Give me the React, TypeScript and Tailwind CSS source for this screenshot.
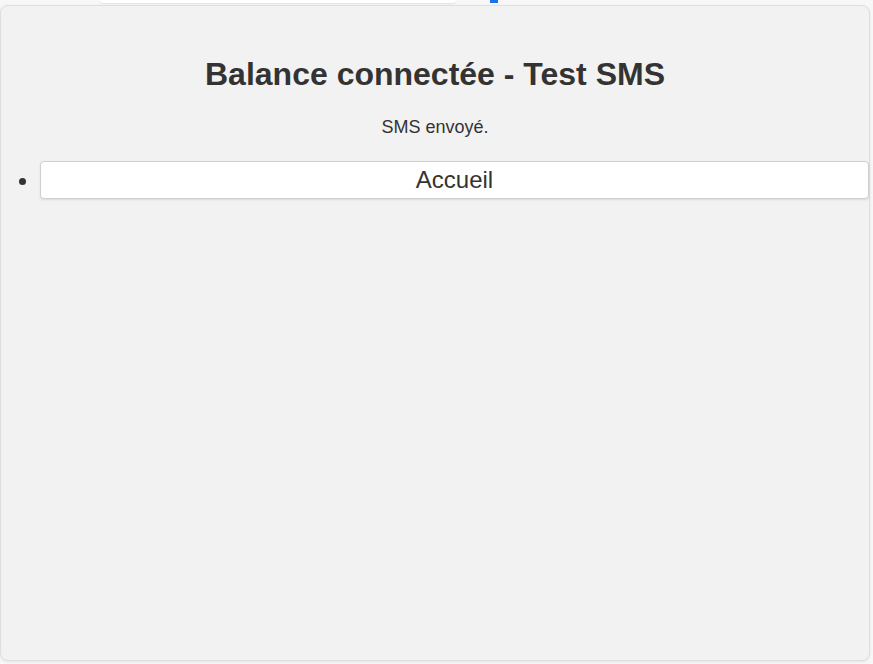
export default function App() {
  return (
    <div className="min-h-screen bg-[#f7f7f7] font-['Liberation_Sans',Arial,sans-serif] text-[#333]">
      {/* top strip, clipped content above the card */}
      <div className="flex h-[5px] items-start">
        <div className="ml-[100px] h-[3px] w-[356px] rounded-b-md bg-white shadow-[0_1px_1px_rgba(0,0,0,0.08)]" />
        <div className="ml-[34px] h-[3px] w-[8px] bg-[#1a73e8]" />
      </div>

      {/* card */}
      <div className="h-[656px] w-[870px] rounded-lg border border-[#dedede] bg-[#f2f2f2] shadow-[0_1px_3px_rgba(0,0,0,0.08)]">
        <h1 className="pt-[50px] text-center text-[32px] font-bold leading-9">
          Balance connectée - Test SMS
        </h1>
        <p className="mt-[25px] text-center text-[18px] leading-5">SMS envoyé.</p>
        <ul className="mt-[24px] list-disc pl-[39px] text-[24px] leading-none">
          <li>
            <button className="h-[38px] w-[829px] rounded border border-[#cfcfcf] bg-white text-[24px] leading-none text-[#333] shadow-[0_1px_2px_rgba(0,0,0,0.1)]">
              Accueil
            </button>
          </li>
        </ul>
      </div>
    </div>
  );
}
